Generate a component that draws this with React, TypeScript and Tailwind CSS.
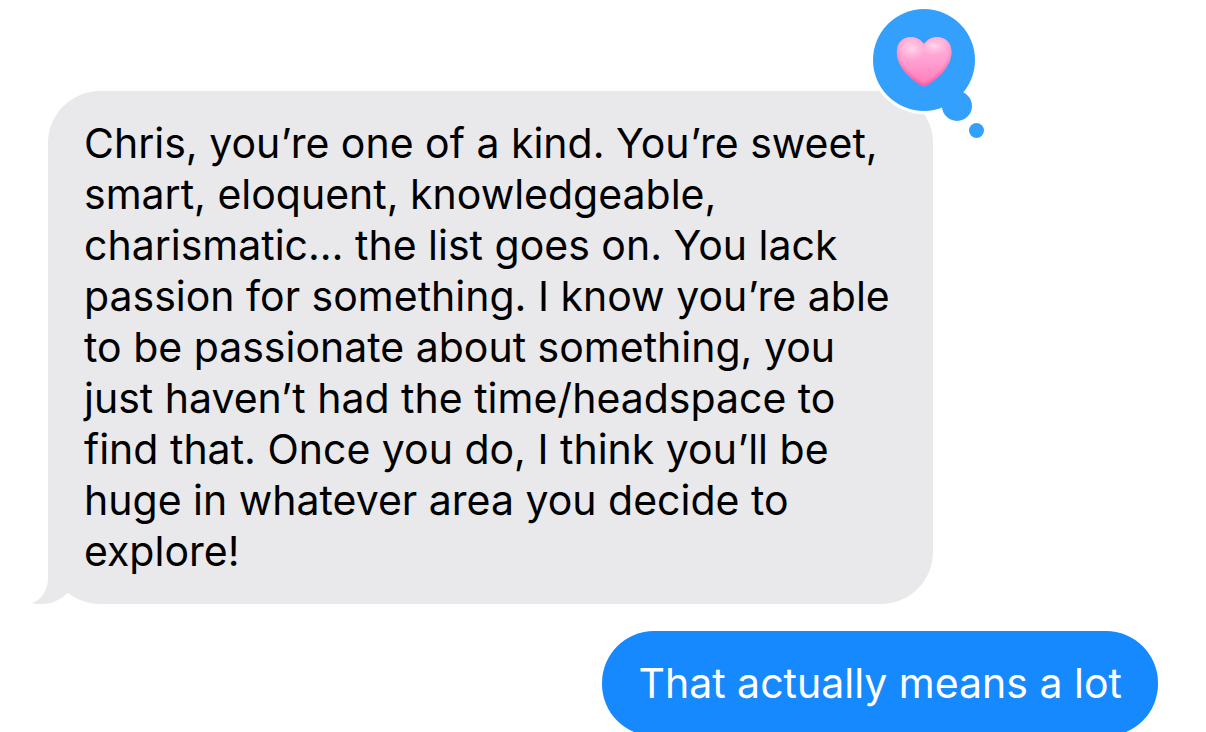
const message =
  "Chris, you’re one of a kind. You’re sweet, smart, eloquent, knowledgeable, charismatic… the list goes on. You lack passion for something. I know you’re able to be passionate about something, you just haven’t had the time/headspace to find that. Once you do, I think you’ll be huge in whatever area you decide to explore!";

const heart =
  "M924 44C920 39 916 37 911 37C902 37 896.800 43.500 896.800 52C896.800 67 911 79 920.500 85Q924 87.400 927.500 85C937 79 951.500 67 951.500 52C951.500 43.500 946 37 937 37C932 37 928 39 924 44Z";

function HeartReaction() {
  return (
    <svg
      className="absolute -top-[84px] -right-[55px] h-[136px] w-[120px]"
      viewBox="868 7 120 136"
      role="img"
      aria-label="Heart reaction"
    >
      <defs>
        <linearGradient id="heart-fill" x1="0" y1="0" x2="0" y2="1">
          <stop offset="0" stopColor="#ffb8dc" />
          <stop offset="0.5" stopColor="#ff9fd2" />
          <stop offset="1" stopColor="#ff7ab8" />
        </linearGradient>
        <linearGradient id="heart-rim" x1="0" y1="0" x2="0" y2="1">
          <stop offset="0" stopColor="#ff8fc4" stopOpacity="0.4" />
          <stop offset="1" stopColor="#f74f9a" stopOpacity="0.9" />
        </linearGradient>
        <radialGradient id="heart-shine">
          <stop offset="0" stopColor="#ffdcf0" stopOpacity="0.9" />
          <stop offset="1" stopColor="#ffc0e0" stopOpacity="0" />
        </radialGradient>
        <filter id="heart-soften" x="-20%" y="-20%" width="140%" height="140%">
          <feGaussianBlur stdDeviation="1.800" />
        </filter>
        <clipPath id="heart-clip">
          <path d={heart} />
        </clipPath>
      </defs>
      <g fill="#fff">
        <circle cx="924" cy="60" r="54" />
        <circle cx="957" cy="106" r="18" />
      </g>
      <g fill="#34a0fe">
        <circle cx="924" cy="60" r="51" />
        <circle cx="957" cy="106" r="15" />
        <circle cx="976.5" cy="130.5" r="7.5" />
      </g>
      <path d={heart} fill="url(#heart-fill)" />
      <g clipPath="url(#heart-clip)">
        <path d={heart} fill="none" stroke="url(#heart-rim)" strokeWidth="4" filter="url(#heart-soften)" />
        <ellipse cx="912" cy="49" rx="14" ry="12" fill="url(#heart-shine)" />
        <ellipse cx="934" cy="46" rx="14" ry="10" fill="url(#heart-shine)" />
      </g>
    </svg>
  );
}

export default function App() {
  return (
    <main className="flex flex-col gap-[27px] overflow-hidden bg-white pt-[91px] pr-12 pl-12 font-['Inter',sans-serif] text-[41px] leading-[51px] text-black">
      <article className="relative w-full max-w-[885px] self-start rounded-[52px] bg-[#e9e9eb] pt-[27px] pr-6 pb-[27px] pl-9">
        <svg className="absolute bottom-0 -left-4 h-14 w-14" viewBox="0 0 56 56" aria-hidden="true">
          <path d="M16 0V30C16 43 9 52 0 55C12 58 27 55 36 44L56 36V0Z" fill="#e9e9eb" />
        </svg>
        <p className="relative">{message}</p>
        <HeartReaction />
      </article>
      <article className="self-end rounded-[52px] bg-[#1689fe] px-9 py-[27px] text-white">
        <p>That actually means a lot</p>
      </article>
    </main>
  );
}
